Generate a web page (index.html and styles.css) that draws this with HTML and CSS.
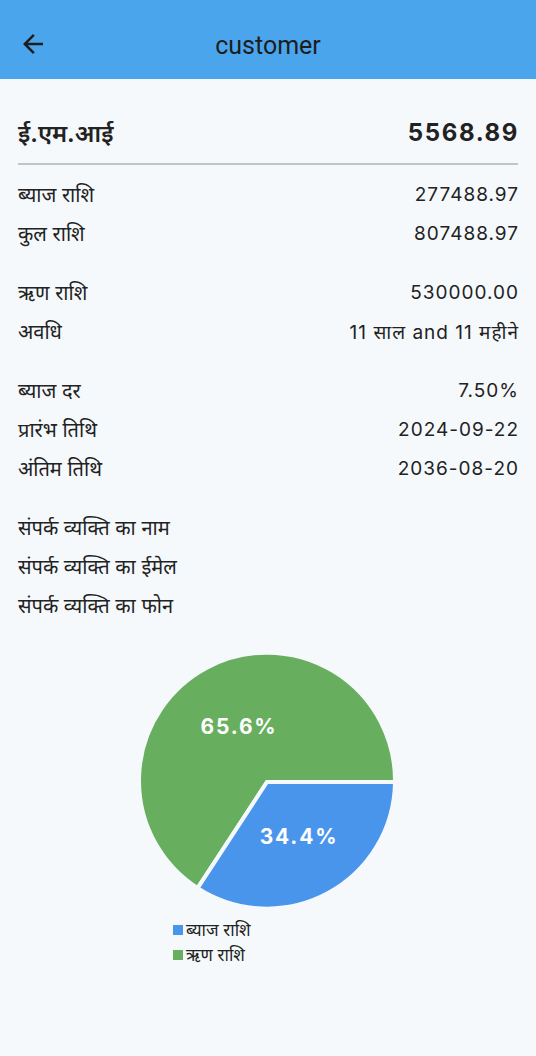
FILE: index.html
```html
<!DOCTYPE html>
<html lang="hi">
<head>
<meta charset="utf-8">
<title>customer</title>
<link rel="stylesheet" href="styles.css">
</head>
<body>
<header class="appbar">
  <div class="appbar-left">
    <svg class="back" viewBox="0 0 24 24" width="30" height="30"><path d="M20 11H7.83l5.59-5.59L12 4l-8 8 8 8 1.41-1.41L7.83 13H20v-2z" fill="#1d1d1d"/></svg>
  </div>
  <h1 class="title">customer</h1>
  <div></div>
</header>
<main class="content">
  <div class="emi-row">
    <span class="emi-label">ई.एम.आई</span>
    <span class="emi-value">5568.89</span>
  </div>
  <div class="divider"></div>

  <section class="group">
    <div class="row"><span class="label">ब्याज राशि</span><span class="value">277488.97</span></div>
    <div class="row"><span class="label">कुल राशि</span><span class="value">807488.97</span></div>
  </section>
  <section class="group">
    <div class="row"><span class="label">ऋण राशि</span><span class="value">530000.00</span></div>
    <div class="row"><span class="label">अवधि</span><span class="value">11 साल and 11 महीने</span></div>
  </section>
  <section class="group">
    <div class="row"><span class="label">ब्याज दर</span><span class="value">7.50%</span></div>
    <div class="row"><span class="label">प्रारंभ तिथि</span><span class="value">2024-09-22</span></div>
    <div class="row"><span class="label">अंतिम तिथि</span><span class="value">2036-08-20</span></div>
  </section>
  <section class="group">
    <div class="row"><span class="label">संपर्क व्यक्ति का नाम</span></div>
    <div class="row"><span class="label">संपर्क व्यक्ति का ईमेल</span></div>
    <div class="row"><span class="label">संपर्क व्यक्ति का फोन</span></div>
  </section>

  <section class="chart">
    <svg class="pie" viewBox="0 0 264 264" width="264" height="264">
      <path d="M132,132 L62.6,238.2 A128,128 0 1 1 260,132 Z" fill="#67AE5F" stroke="#F5F9FC" stroke-width="4" stroke-linejoin="miter"/>
      <path d="M132,132 L260,132 A128,128 0 0 1 62.6,238.2 Z" fill="#4A95EC" stroke="#F5F9FC" stroke-width="4" stroke-linejoin="miter"/>
      <text class="pie-label" x="104" y="84" text-anchor="middle">65.6%</text>
      <text class="pie-label" x="164" y="194" text-anchor="middle">34.4%</text>
    </svg>
    <ul class="legend">
      <li><span class="swatch swatch-blue"></span>ब्याज राशि</li>
      <li><span class="swatch swatch-green"></span>ऋण राशि</li>
    </ul>
  </section>
</main>
</body>
</html>
```

FILE: styles.css
```css
* { box-sizing: border-box; }
html, body { margin: 0; padding: 0; }
body {
  background: #F5F9FC;
  font-family: Inter, Roboto, "Noto Sans", sans-serif;
  color: #222;
  width: 536px;
  min-height: 1056px;
}
.appbar {
  height: 79px;
  padding-top: 9px;
  background: #4BA5EC;
  display: grid;
  grid-template-columns: 1fr auto 1fr;
  align-items: center;
}
.appbar-left { display: flex; align-items: center; padding-left: 18px; }
.back { display: block; }
.title {
  margin: 3px 0 0 0;
  font-family: Roboto, sans-serif;
  font-size: 25px;
  font-weight: 400;
  color: #1d1d1d;
  line-height: 30px;
}
.content { padding: 0 18px; }
.emi-row {
  margin-top: 30px;
  height: 46px;
  display: flex;
  justify-content: space-between;
  align-items: center;
}
.emi-label { font-size: 24px; font-weight: 600; }
.emi-value { font-size: 24px; font-weight: 700; letter-spacing: 1.6px; margin-right: -1px; }
.divider {
  margin-top: 8px;
  height: 2px;
  background: #C4C4C4;
  margin-bottom: 10px;
}
.group { margin-bottom: 20px; }
.row {
  height: 39px;
  display: flex;
  justify-content: space-between;
  align-items: center;
  font-size: 19px;
}
.label { font-size: 20px; }
.value { letter-spacing: 1px; margin-right: -1px; }
.chart {
  display: flex;
  flex-direction: column;
  align-items: center;
  margin-top: 25px;
}
.pie { display: block; margin-left: -2px; }
.pie-label { fill: #fff; font-family: Inter, Roboto, sans-serif; font-size: 21px; font-weight: 700; letter-spacing: 1.8px; }
.legend {
  list-style: none;
  margin: 3px 0 0 0;
  padding: 0;
  align-self: flex-start;
  margin-left: 155px;
}
.legend li {
  display: flex;
  align-items: center;
  height: 25px;
  font-size: 17px;
}
.swatch { width: 10px; height: 10px; margin-right: 3px; }
.swatch-blue { background: #4A95EC; }
.swatch-green { background: #67AE5F; }
```
